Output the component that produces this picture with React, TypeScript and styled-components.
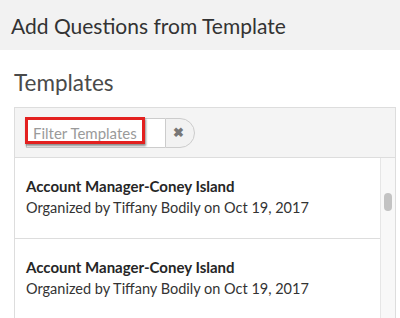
import React from "react";
import styled, { createGlobalStyle } from "styled-components";

const Global = createGlobalStyle`
  html, body { margin: 0; padding: 0; background: #fff; }
  body { font-family: Lato, "Open Sans", sans-serif; width: 400px; height: 318px; overflow: hidden; }
  * { box-sizing: border-box; }
`;

const Header = styled.div`
  height: 50px;
  background: #f2f2f2;
  display: flex;
  align-items: center;
  padding-left: 11px;
  font-size: 21px;
  color: #333;
`;

const Section = styled.div`
  padding: 0 4px 0 14px;
`;

const Heading = styled.h2`
  margin: 0;
  height: 57px;
  display: flex;
  align-items: center;
  padding-top: 7px;
  font-weight: 400;
  font-size: 22.5px;
  color: #4a4a4a;
`;

const Panel = styled.div`
  border: 1px solid #ddd;
  border-bottom: none;
  height: 212px;
  display: flex;
  flex-direction: column;
`;

const Toolbar = styled.div`
  height: 50px;
  background: #f4f4f4;
  border-bottom: 1px solid #ddd;
  display: flex;
  align-items: center;
  padding-left: 11px;
  flex-shrink: 0;
`;

const InputGroup = styled.div`
  position: relative;
  display: flex;
  height: 30px;
`;

const Input = styled.input`
  width: 139px;
  height: 30px;
  border: 1px solid #ccc;
  border-right: none;
  border-radius: 0;
  background: #fff;
  padding: 0 6px;
  font-family: inherit;
  font-size: 15px;
  color: #333;
  outline: none;
  &::placeholder { color: #9a9a9a; }
`;

const ClearButton = styled.button`
  width: 30px;
  height: 30px;
  border: 1px solid #ccc;
  border-radius: 0 15px 15px 0;
  background: #f2f2f2;
  display: flex;
  align-items: center;
  justify-content: center;
  padding: 0 3px 0 0;
  color: #777;
  font-size: 13px;
  font-weight: 700;
`;

const Highlight = styled.div`
  position: absolute;
  left: -1px;
  top: -1px;
  width: 120px;
  height: 27px;
  border: 3px solid #e3201f;
  box-shadow: 1px 2px 2px rgba(0, 0, 0, 0.45);
  pointer-events: none;
`;

const Body = styled.div`
  flex: 1;
  display: flex;
  min-height: 0;
`;

const List = styled.div`
  flex: 1;
`;

const Row = styled.div`
  height: 81px;
  border-bottom: 1px solid #ddd;
  padding: 18px 0 0 11px;
  &:last-child { border-bottom: none; }
`;

const RowTitle = styled.div`
  font-size: 15px;
  font-weight: 700;
  color: #262626;
  line-height: 21px;
`;

const RowSub = styled.div`
  font-size: 14.5px;
  color: #333;
  line-height: 21px;
`;

const Track = styled.div`
  width: 15px;
  background: #f8f8f8;
  border-left: 1px solid #e6e6e6;
  padding: 35px 0 0 3px;
`;

const Thumb = styled.div`
  width: 8px;
  height: 18px;
  border-radius: 4px;
  background: #c3c3c3;
`;

const rows = [
  { title: "Account Manager-Coney Island", sub: "Organized by Tiffany Bodily on Oct 19, 2017" },
  { title: "Account Manager-Coney Island", sub: "Organized by Tiffany Bodily on Oct 19, 2017" },
];

export default function App() {
  return (
    <>
      <Global />
      <Header>Add Questions from Template</Header>
      <Section>
        <Heading>Templates</Heading>
        <Panel>
          <Toolbar>
            <InputGroup>
              <Input placeholder="Filter Templates" />
              <ClearButton>✖</ClearButton>
              <Highlight />
            </InputGroup>
          </Toolbar>
          <Body>
            <List>
              {rows.map((r, i) => (
                <Row key={i}>
                  <RowTitle>{r.title}</RowTitle>
                  <RowSub>{r.sub}</RowSub>
                </Row>
              ))}
            </List>
            <Track>
              <Thumb />
            </Track>
          </Body>
        </Panel>
      </Section>
    </>
  );
}
